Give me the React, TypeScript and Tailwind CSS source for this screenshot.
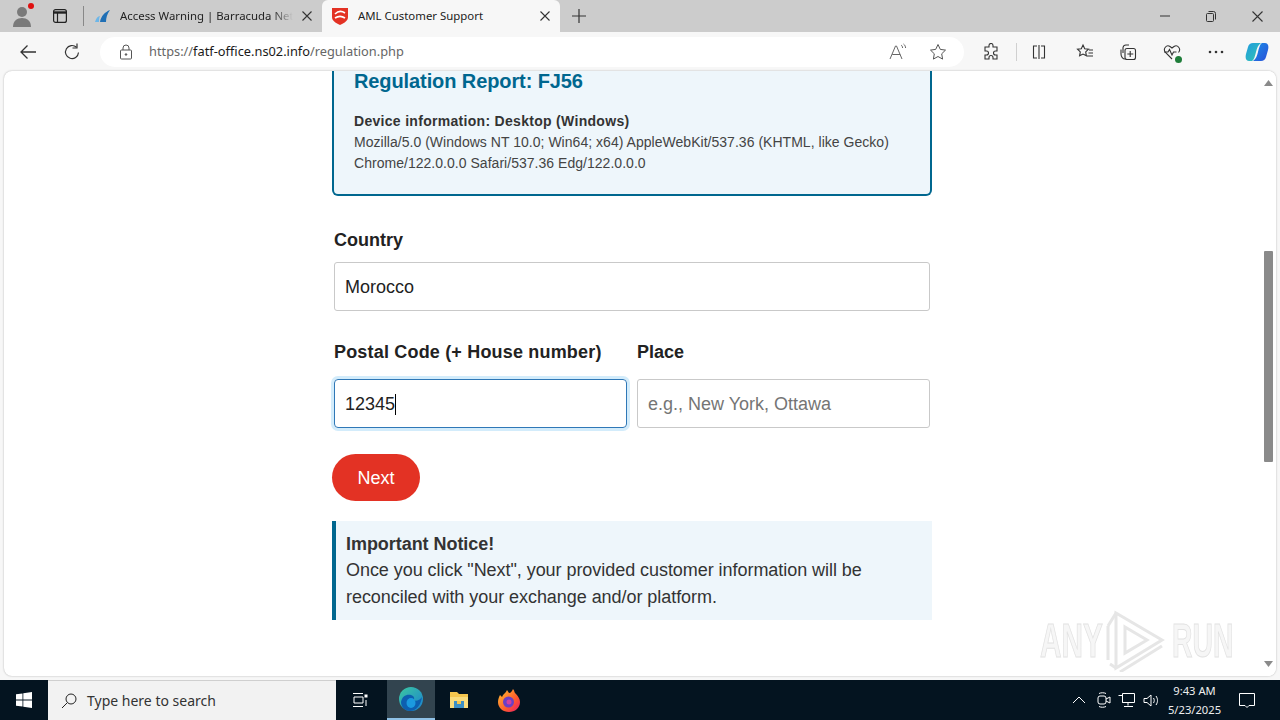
import React from "react";

const sans = "font-['Liberation_Sans',Arial,sans-serif]";

function Tab({ active, title, icon, w }: { active?: boolean; title: string; icon: React.ReactNode; w: string }) {
  return (
    <div className={`${w} h-full flex items-center relative ${active ? "bg-[#f7f7f7] rounded-t-[6px]" : ""}`}>
      <div className="w-[36px] pl-[10px] shrink-0 flex items-center">{icon}</div>
      <span className={`flex-1 overflow-hidden whitespace-nowrap text-[11.4px] text-[#222] ${active ? "" : "[mask-image:linear-gradient(to_right,black_88%,transparent)]"}`}>{title}</span>
      <svg width="10" height="10" viewBox="0 0 10 10" className="ml-[9px] mr-[10px] shrink-0" stroke="#333" strokeWidth="1.1"><path d="M.5.5l9 9M9.5.5l-9 9" /></svg>
    </div>
  );
}

const stroke = { fill: "none", stroke: "#333", strokeWidth: 1.1 };

function Toolbar() {
  return (
    <div className="h-[39px] bg-[#f7f7f7] flex items-center shrink-0">
      <div className="w-[56px] flex justify-center">
        <svg width="18" height="16" viewBox="0 0 18 16" {...stroke} strokeWidth={1.3}><path d="M17 8H2M8.500 1.500 2 8l6.500 6.500" /></svg>
      </div>
      <div className="w-[32px] flex justify-center">
        <svg width="18" height="18" viewBox="0 0 18 18" {...stroke} strokeWidth={1.2}><path d="M15.500 9.500a6.500 6.500 0 1 1-2-5.200" /><path d="M14 .5v4.500H9.500" /></svg>
      </div>
      <div className="w-[12px]" />
      <div className="w-[864px] h-[30px] bg-white rounded-[15px] flex items-center">
        <svg width="14" height="16" viewBox="0 0 14 16" className="ml-[19px]" fill="none" stroke="#555"><rect x="1.500" y="6" width="11" height="9" rx="1" /><path d="M4 6V4a3 3 0 0 1 6 0v2" /><circle cx="7" cy="10.500" r=".8" fill="#555" /></svg>
        <span className="ml-[16px] text-[12.8px] text-[#666] whitespace-nowrap flex-1">https://<span className="text-[#1a1a1a]">fatf-office.ns02.info</span>/regulation.php</span>
        <svg width="18" height="18" viewBox="0 0 18 18" fill="none" stroke="#666" className="mr-[22px]"><path d="M1 16 6.500 3h1L13 16M3.200 11.500h8" /><path d="M12 2c1 .7 1.500 1.500 1.600 3M14.500 1c1.300 1 2 2.300 2.100 4" /></svg>
        <svg width="18" height="18" viewBox="0 0 18 18" fill="none" stroke="#555" className="mr-[17px]"><path d="m9 1.500 2.300 4.900 5.200.7-3.800 3.700.9 5.300L9 13.500l-4.600 2.600.9-5.300L1.500 7.100l5.200-.7z" /></svg>
      </div>
      <div className="w-[19px]" />
      <svg width="16" height="18" viewBox="0 0 16 18" {...stroke}><path d="M6 2.500a2 2 0 0 1 4 0V4h4v4h-1.500a2 2 0 0 0 0 4H14v4H10v-1.500a2 2 0 0 0-4 0V16H2v-4h1.500a2 2 0 0 0 0-4H2V4h4z" /></svg>
      <div className="w-[1px] h-[18px] bg-[#d0d0d0] ml-[17px]" />
      <svg width="14" height="16" viewBox="0 0 14 16" {...stroke} className="ml-[15px]"><path d="M7 1v14M5 2H1.500v12H5M9 2h3.500v12H9" /></svg>
      <svg width="18" height="18" viewBox="0 0 18 18" {...stroke} className="ml-[30px]"><path d="m7 2 1.700 3.700 3.800.5-2.800 2.700.7 3.900L7 11l-3.400 1.800.7-3.900L1.500 6.200l3.800-.5zM13 7h4M12.500 10H17M11 13h6" /></svg>
      <svg width="18" height="18" viewBox="0 0 18 18" {...stroke} className="ml-[25px]"><path d="M4 10V4.500A3 3 0 0 1 7 2h3M2 6.500V11c0 3 2 5 4 5" /><rect x="6" y="5.500" width="10.500" height="11" rx="2" /><path d="M11.200 8v6M8.300 11h6" /></svg>
      <div className="relative ml-[26px] w-[18px] h-[18px]">
        <svg width="18" height="18" viewBox="0 0 18 18" {...stroke}><path d="M9 16 2.500 9.500C-.5 6 3.500 1 7 3.500L9 5l2-1.500c3.500-2.500 7.500 2.500 4.500 6" /><path d="M1 9h4l1.500-2.500L9 12l1.500-3h3" /></svg>
        <span className="absolute right-[-1px] bottom-[-2px] w-[7px] h-[7px] rounded-full bg-[#1f7d3a]" />
      </div>
      <svg width="16" height="4" viewBox="0 0 16 4" fill="#333" className="ml-[27px]"><circle cx="2" cy="2" r="1.300" /><circle cx="8" cy="2" r="1.300" /><circle cx="14" cy="2" r="1.300" /></svg>
      <svg width="24" height="24" viewBox="0 0 24 24" className="ml-[21px]">
        <defs>
          <linearGradient id="cp1" x1="0" y1="0" x2="1" y2="1"><stop offset="0" stopColor="#1f9be0" /><stop offset="1" stopColor="#34c6b0" /></linearGradient>
          <linearGradient id="cp2" x1="0" y1="0" x2="1" y2="1"><stop offset="0" stopColor="#1a8fe8" /><stop offset="1" stopColor="#2a4fd8" /></linearGradient>
        </defs>
        <path d="M8 3h8c-3 2-4 5-5 9s-2 8-4 9H4C1 21 0 18 1 14l2-7c.7-2.500 2.500-4 5-4z" fill="url(#cp1)" />
        <path d="M16 21H8c3-2 4-5 5-9s2-8 4-9h3c3 0 4 3 3 7l-2 7c-.7 2.500-2.500 4-5 4z" fill="url(#cp2)" />
      </svg>
    </div>
  );
}

function Page() {
  return (
    <div className="flex-1 min-h-0 bg-[#f7f7f7] pl-[4px] pr-[4px] pb-[4px] flex flex-col">
      <div className="flex-1 min-h-0 flex bg-white rounded-[8px] shadow-[0_0_2px_rgba(0,0,0,0.3)] overflow-hidden">
        <div className={`flex-1 overflow-hidden pl-[328px] ${sans}`}>
          <div className="w-[600px]">
            <div className="h-[127px] -mt-[2px] bg-[#eef6fb] border-2 border-t-0 border-[#00678f] rounded-b-[6px] pl-[20px]">
              <h2 className="text-[20px] font-bold leading-[24px] tracking-[-0.1px] text-[#00678f]">Regulation Report: FJ56</h2>
              <p className="mt-[18px] text-[14px] font-bold leading-[21px] tracking-[0.3px] text-[#333]">Device information: Desktop (Windows)</p>
              <p className="text-[14px] leading-[21px] tracking-[0.03px] text-[#444] w-[560px]">Mozilla/5.0 (Windows NT 10.0; Win64; x64) AppleWebKit/537.36 (KHTML, like Gecko) Chrome/122.0.0.0 Safari/537.36 Edg/122.0.0.0</p>
            </div>
            <div className="pr-[2px] mt-[32px]">
              <div>
                <label className="block pl-[2px] text-[18px] font-bold leading-[24px] text-[#222] mb-[10px]">Country</label>
                <div className="h-[49px] border border-[#c9c9c9] rounded-[3px] flex items-center pl-[10px] pt-[1px] ml-[2px] text-[18px] text-[#222]">Morocco</div>
              </div>
              <div className="flex gap-[10px] mt-[29px]">
                <div className="flex-1 min-w-0">
                  <label className="block pl-[2px] text-[18px] font-bold leading-[24px] tracking-[0.18px] text-[#222] mb-[15px] whitespace-nowrap">Postal Code (+ House number)</label>
                  <div className="ml-[2px] h-[49px] border border-[#2f78b7] rounded-[4px] shadow-[0_0_0_3px_#d3ecfb] flex items-center pl-[10px] pt-[1px] text-[18px] text-[#222]">12345<span className="w-[1px] h-[21px] bg-black" /></div>
                </div>
                <div className="w-[293px] shrink-0">
                  <label className="block text-[18px] font-bold leading-[24px] text-[#222] mb-[15px]">Place</label>
                  <div className="h-[49px] border border-[#c9c9c9] rounded-[3px] flex items-center pl-[10px] pt-[1px] text-[18px] text-[#757575]">e.g., New York, Ottawa</div>
                </div>
              </div>
            </div>
            <button className="mt-[26px] w-[88px] h-[47px] pt-[1px] rounded-[24px] bg-[#e33224] text-white text-[18px] block">Next</button>
            <div className="mt-[20px] h-[99px] bg-[#eef6fb] border-l-[4px] border-[#00678f] pl-[10px] pt-[10px] text-[18px] leading-[27px] tracking-[-0.05px] text-[#333] w-[600px]">
              <strong className="block leading-[26px]">Important Notice!</strong>
              Once you click "Next", your provided customer information will be reconciled with your exchange and/or platform.
            </div>
          </div>
        </div>
        <div className="w-[16px] shrink-0 bg-white flex flex-col items-center">
          <svg width="9" height="6" viewBox="0 0 9 6" fill="#8a8a8a" className="mt-[9px]"><path d="M4.500 0 9 6H0z" /></svg>
          <div className="w-[9px] h-[211px] bg-[#8a8a8a] rounded-[1px] mt-[165px]" />
          <div className="flex-1" />
          <svg width="9" height="6" viewBox="0 0 9 6" fill="#8a8a8a" className="mb-[9px]"><path d="M4.500 6 9 0H0z" /></svg>
        </div>
      </div>
      <div className="absolute left-[1040px] top-[610px] w-[196px] h-[62px] flex items-center pointer-events-none">
        <span className="w-[68px] shrink-0 text-[48px] leading-none text-[#f6f6f6] font-['Liberation_Sans',sans-serif] font-bold scale-x-[.62] origin-left whitespace-nowrap [-webkit-text-stroke:1px_#e2e2e2]">ANY</span>
        <svg width="62" height="62" viewBox="0 0 62 62" fill="none" stroke="#e6e6e6" strokeWidth="3" className="shrink-0 -ml-[4px]"><path d="M4 16V50M12 3 58 30 12 58ZM21 17l22 13-22 13z" /><path d="M4 16 12 3M6 54l6 4M16 62l42-26" /></svg>
        <span className="shrink-0 text-[48px] leading-none text-[#f6f6f6] font-['Liberation_Sans',sans-serif] font-bold scale-x-[.59] origin-left whitespace-nowrap [-webkit-text-stroke:1px_#e2e2e2] ml-[6px]">RUN</span>
      </div>
    </div>
  );
}

function Taskbar() {
  return (
    <div className="h-[40px] bg-[#041420] flex items-stretch shrink-0 relative">
      <div className="w-[48px] flex items-center justify-center">
        <svg width="16" height="16" viewBox="0 0 16 16" fill="#fff"><path d="M0 2.300 6.500 1.400v6.200H0zM7.300 1.300 16 0v7.600H7.300zM0 8.400h6.500v6.200L0 13.700zM7.300 8.400H16V16l-8.700-1.300z" /></svg>
      </div>
      <div className="w-[288px] bg-[#f2f2f2] flex items-center border-t border-[#cfcfcf]">
        <svg width="16" height="16" viewBox="0 0 16 16" fill="none" stroke="#222" className="ml-[13px]"><circle cx="10" cy="6" r="5" /><path d="M6.300 9.700 1 15" /></svg>
        <span className="ml-[10px] text-[14px] text-[#333] font-['Noto_Sans',sans-serif]">Type here to search</span>
      </div>
      <div className="w-[48px] flex items-center justify-center">
        <svg width="16" height="16" viewBox="0 0 16 16" fill="none" stroke="#fff"><path d="M1 1.500h10M1 14.500h10M2 5h9v6H2z" /><rect x="13" y="3" width="2" height="2" fill="#fff" /><path d="M14 8v6" /></svg>
      </div>
      <div className="w-[3px]" />
      <div className="w-[48px] bg-[#32444f] flex items-center justify-center border-b-2 border-[#8fc1e6]">
        <svg width="24" height="24" viewBox="0 0 24 24">
          <defs><linearGradient id="ed" x1="0" y1="0" x2="1" y2="1"><stop offset="0" stopColor="#3cc9a0" /><stop offset="1" stopColor="#1a80d0" /></linearGradient></defs>
          <circle cx="12" cy="12" r="12" fill="url(#ed)" />
          <path d="M2 15C3 8 10 6 14 9c2 2 1 4 0 4 3 2 7 0 9-3-1 8-6 14-12 14C6 24 2 20 2 15z" fill="#0d5fb0" />
          <ellipse cx="12" cy="16" rx="4.500" ry="5" fill="#1b9ae0" />
        </svg>
      </div>
      <div className="w-[48px] flex items-center justify-center">
        <svg width="22" height="20" viewBox="0 0 20 20"><path d="M1 2h7l2 2h9v14H1z" fill="#f5c64e" /><path d="M1 7h18v11H1z" fill="#fadc7c" /><rect x="5" y="11" width="10" height="7" fill="#3d8fc4" /><rect x="8" y="11" width="4" height="3" fill="#f5c64e" /></svg>
      </div>
      <div className="w-[48px] pl-[4px] flex items-center justify-center">
        <svg width="24" height="24" viewBox="0 0 24 24">
          <defs><linearGradient id="ff" x1="0" y1="0" x2="1" y2="1"><stop offset="0" stopColor="#ffc530" /><stop offset=".6" stopColor="#ff5a2c" /><stop offset="1" stopColor="#e5186f" /></linearGradient></defs>
          <path d="M16 1c2 2 1 4 3 5 2 2 4 5 4 8 0 6-5 10-11 10S1 20 1 14c0-3 1-5 2-7l2 2c1-3 4-4 5-7l2 3c2 0 3-2 4-4z" fill="url(#ff)" />
          <circle cx="11.500" cy="14" r="5.500" fill="#6b3fc4" />
          <circle cx="12" cy="14" r="2.500" fill="#d03fa0" />
        </svg>
      </div>
      <div className="flex-1" />
      <div className="flex items-center">
        <svg width="14" height="8" viewBox="0 0 14 8" fill="none" stroke="#fff" className="mr-[10px]"><path d="M1 7l6-6 6 6" /></svg>
        <svg width="16" height="16" viewBox="0 0 16 16" fill="none" stroke="#fff" className="mr-[6px]"><rect x="2" y="4" width="8" height="8" rx="2" /><path d="M10 7l4-2v6l-4-2M3 1.500c2-1 5-1 7 0M3 14.500c2 1 5 1 7 0" /></svg>
        <svg width="17" height="15" viewBox="0 0 17 15" fill="none" stroke="#fff" className="mr-[8px]"><path d="M4.500.5h12v9h-12zM.5 2.500h4v7M10 9.500v3M6 13.500h9" /></svg>
        <svg width="17" height="15" viewBox="0 0 17 15" fill="none" stroke="#fff" className="mr-[2px]"><path d="M1 5.500h3L8 2v11L4 9.500H1zM10.500 5c1 1.500 1 3.500 0 5M13 3c2 3 2 6 0 9" /></svg>
      </div>
      <div className="w-[62px] pl-[3px] flex flex-col items-center justify-center text-[11.2px] leading-[19px] text-[#eeeeee] font-['Noto_Sans',sans-serif] whitespace-nowrap">
        <span>9:43 AM</span>
        <span>5/23/2025</span>
      </div>
      <div className="w-[46px] mr-[10px] flex items-center justify-center">
        <svg width="18" height="17" viewBox="0 0 18 17" fill="none" stroke="#fff"><path d="M1.500 1.500h15v12H11l-2 2-2-2H1.500z" /></svg>
      </div>
    </div>
  );
}

export default function App() {
  return (
    <div className="w-[1280px] h-[720px] overflow-hidden flex flex-col relative font-['Noto_Sans',sans-serif] bg-white">
      <div className="h-[32px] bg-[#cccccc] flex items-center shrink-0">
        <div className="w-[43px] flex justify-center relative">
          <svg width="20" height="22" viewBox="0 0 20 22" fill="#7a7a7a"><circle cx="10" cy="7" r="5" /><path d="M1 22c0-6 4-9 9-9s9 3 9 9z" /></svg>
          <span className="absolute right-[9px] top-[-2px] w-[6px] h-[6px] rounded-full bg-[#e01010]" />
        </div>
        <div className="w-[40px] pr-[6px] flex justify-center">
          <svg width="14" height="14" viewBox="0 0 14 14" fill="none" stroke="#222" strokeWidth="1.200"><rect x=".6" y=".6" width="12.800" height="12.800" rx="2" /><path d="M.6 3.500h12.800" strokeWidth="2.400" /><path d="M4.500 3.500v10" /></svg>
        </div>
        <div className="w-[1px] h-[20px] bg-[#888]" />
        <Tab w="w-[238px]" title="Access Warning | Barracuda Netw" icon={
          <svg width="18" height="14" viewBox="0 0 18 14"><path d="M1 13c1-4 3-6 5-6-1 2-1 4-1 6z" fill="#6db6e8" /><path d="M6 13c1-6 5-10 10-12-3 4-4 8-4 12z" fill="#1f6fb5" /></svg>
        } />
        <Tab active w="w-[238px]" title="AML Customer Support" icon={
          <svg width="16" height="18" viewBox="0 0 16 18"><path d="M0 1h16v9c0 4-4 6-8 8-4-2-8-4-8-8z" fill="#e33224" /><path d="M3 7c3-3 7-3 10-1M3 11c3-2 7-2 10 0" stroke="#fff" strokeWidth="1.600" fill="none" /></svg>
        } />
        <div className="w-[20px] ml-[9px] flex justify-center">
          <svg width="14" height="14" viewBox="0 0 14 14" stroke="#333" strokeWidth="1.200"><path d="M7 0v14M0 7h14" /></svg>
        </div>
        <div className="flex-1" />
        <div className="flex items-center text-[#333]">
          <div className="w-[46px] flex justify-center"><svg width="10" height="2" viewBox="0 0 10 2" stroke="#333"><path d="M0 1h10" /></svg></div>
          <div className="w-[46px] flex justify-center"><svg width="10" height="11" viewBox="0 0 10 11" fill="none" stroke="#333"><rect x=".5" y="2.500" width="7" height="8" rx="1" /><path d="M2.500.5h5a2 2 0 0 1 2 2v6" /></svg></div>
          <div className="w-[46px] flex justify-center"><svg width="11" height="11" viewBox="0 0 11 11" stroke="#333" strokeWidth="1.100"><path d="M.5.5l10 10M10.500.5l-10 10" /></svg></div>
        </div>
      </div>
      <Toolbar />
      <Page />
      <Taskbar />
    </div>
  );
}
